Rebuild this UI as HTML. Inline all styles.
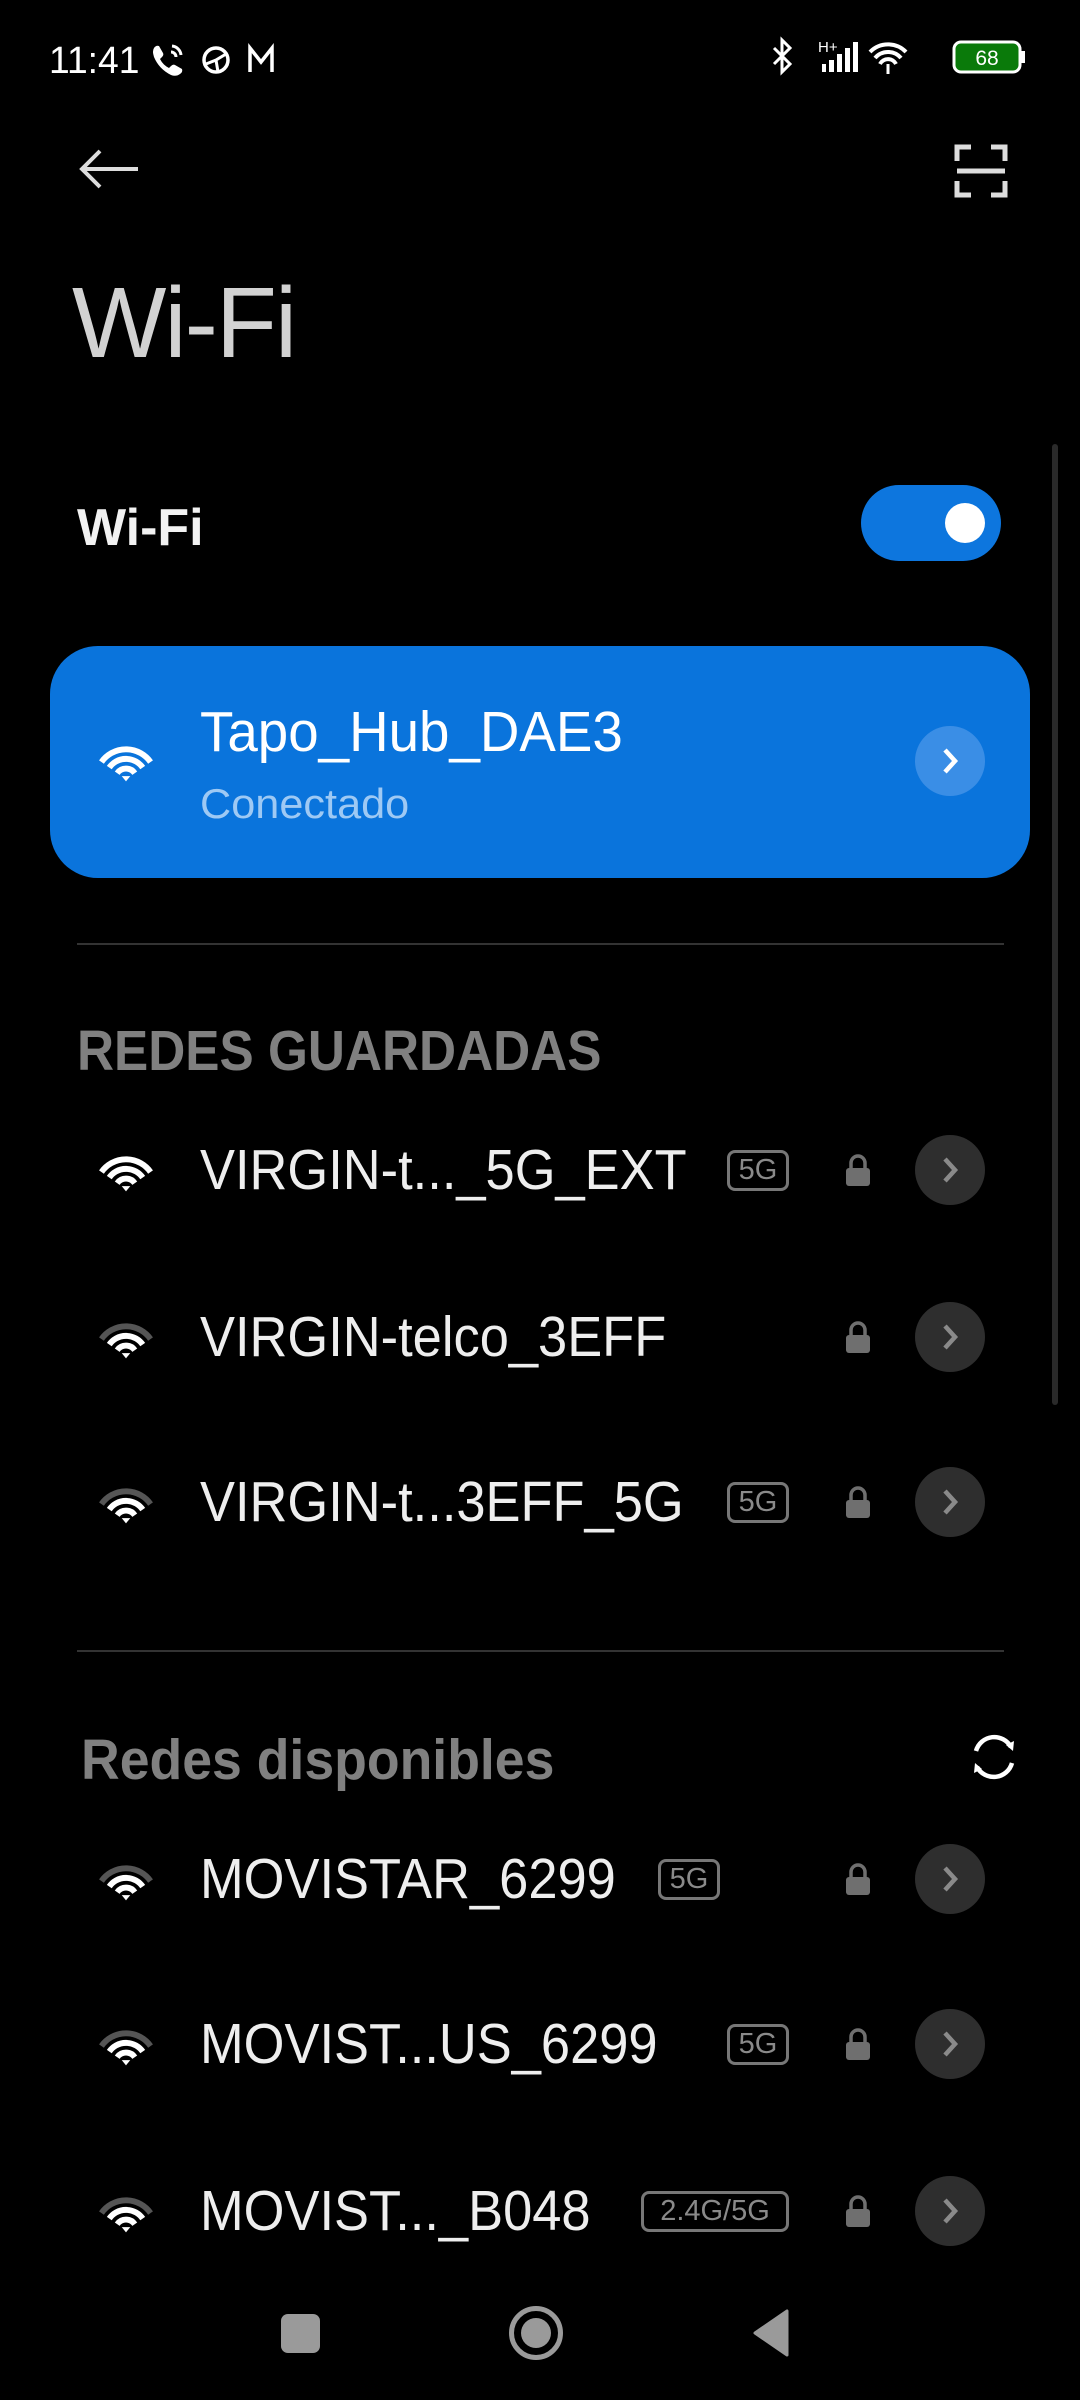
<!DOCTYPE html>
<html><head><meta charset="utf-8"><style>
*{margin:0;padding:0;box-sizing:border-box}
body{width:1080px;height:2400px;background:#000;position:relative;overflow:hidden;font-family:"Liberation Sans",sans-serif;color:#eee}
.a{position:absolute}
.n{position:absolute;left:200px;font-size:57px;line-height:1;color:#eee;transform:scaleX(.92);transform-origin:left center;white-space:nowrap}
.badge{position:absolute;height:41px;border:3px solid #777;border-radius:8px;color:#8a8a8a;font-size:29px;line-height:35px;text-align:center}
.chev{position:absolute;left:915px;width:70px;height:70px;border-radius:50%;background:#2e2e2e}
.lock{position:absolute;left:844px}
.wifi{position:absolute;left:96px}
</style></head><body>

<!-- status bar -->
<div class="a" style="left:49px;top:40px;font-size:38px;color:#fff;transform:scaleX(.98);transform-origin:left">11:41</div>
<svg class="a" style="left:150px;top:42px" width="170" height="36" viewBox="0 0 170 36">
<path d="M4 6 q2-3 5-2 l4 7 q1 2-1 4 l-2 2 q3 6 9 9 l2-2 q2-2 4-1 l7 4 q1 3-2 5 q-4 3-9 1 q-12-6-17-18 q-2-6 0-9z" fill="#fff"/>
<path d="M22 4 a10 10 0 0 1 9 9 M21 10 a5 5 0 0 1 5 5" stroke="#fff" stroke-width="3" fill="none"/>
<circle cx="66" cy="18" r="12" stroke="#fff" stroke-width="3.5" fill="none"/>
<path d="M56 22 l10-4 l10-6 M66 18 l2 12" stroke="#fff" stroke-width="3" fill="none"/>
<path d="M100 30 V6 l11 14 l11-14 V30" stroke="#fff" stroke-width="3.5" fill="none"/>
</svg>
<svg class="a" style="left:770px;top:36px" width="255" height="46" viewBox="0 0 255 46">
<path d="M4 12 l16 16 l-8 8 V4 l8 8 l-16 16" stroke="#fff" stroke-width="3" fill="none"/>
<text x="48" y="16" font-size="15" fill="#fff" font-family="Liberation Sans">H+</text>
<rect x="52" y="28" width="4" height="8" fill="#fff"/><rect x="59" y="24" width="5" height="12" fill="#fff"/><rect x="67" y="18" width="5" height="18" fill="#fff"/><rect x="75" y="12" width="5" height="24" fill="#fff"/><rect x="83" y="6" width="5" height="30" fill="#fff"/>
<path d="M100 16 a25 25 0 0 1 36 0 M105 22 a17 17 0 0 1 26 0 M110 28 a9 9 0 0 1 16 0" stroke="#fff" stroke-width="4" fill="none"/>
<path d="M118 28 v10" stroke="#fff" stroke-width="3"/>
<rect x="184" y="6" width="66" height="30" rx="7" fill="#0a7a0a" stroke="#fff" stroke-width="3"/>
<rect x="251" y="15" width="4" height="12" fill="#fff"/>
<text x="217" y="29" font-size="21" fill="#fff" text-anchor="middle" font-family="Liberation Sans">68</text>
</svg>

<!-- top bar -->
<svg class="a" style="left:78px;top:148px" width="64" height="42" viewBox="0 0 64 42"><path d="M4 21 H60 M22 3 L4 21 L22 39" stroke="#ddd" stroke-width="4" fill="none"/></svg>
<svg class="a" style="left:953px;top:143px" width="56" height="56" viewBox="0 0 56 56"><path d="M4 18 V4 H18 M38 4 H52 V18 M52 38 V52 H38 M18 52 H4 V38" stroke="#ddd" stroke-width="5" fill="none"/><path d="M4 28 H52" stroke="#ddd" stroke-width="5"/></svg>

<div class="a" style="left:72px;top:273px;font-size:100px;line-height:1;color:#d2d2d2;letter-spacing:-2px">Wi-Fi</div>

<div class="a" style="left:77px;top:498px;font-size:52px;font-weight:bold;color:#f2f2f2">Wi-Fi</div>
<div class="a" style="left:861px;top:485px;width:140px;height:76px;border-radius:38px;background:#0d76de"></div>
<div class="a" style="left:945px;top:503px;width:40px;height:40px;border-radius:50%;background:#fff"></div>

<div class="a" style="left:1052px;top:444px;width:6px;height:961px;border-radius:3px;background:#2a2a2a"></div>

<!-- connected card -->
<div class="a" style="left:50px;top:646px;width:980px;height:232px;border-radius:48px;background:#0a74dc"></div>
<svg class="a" style="left:96px;top:738px" width="60" height="44" viewBox="0 0 56 40"><path d="M5.1 21.9 A28 28 0 0 1 50.9 21.9 M12.4 27.1 A19 19 0 0 1 43.6 27.1 M19.8 32.3 A10 10 0 0 1 36.2 32.3" stroke="#fff" stroke-width="5.5" fill="none"/><path d="M24 35 L32 35 L28 40Z" fill="#fff"/></svg>
<div class="a" style="left:200px;top:704px;font-size:57px;line-height:1;color:#fff;transform:scaleX(.96);transform-origin:left">Tapo_Hub_DAE3</div>
<div class="a" style="left:200px;top:783px;font-size:42px;line-height:1;color:#9ec9f4;transform:scaleX(1.03);transform-origin:left">Conectado</div>
<div class="a" style="left:915px;top:726px;width:70px;height:70px;border-radius:50%;background:#3a8ee6"></div>
<svg class="a" style="left:940px;top:746px" width="20" height="30" viewBox="0 0 20 30"><path d="M5 4 L15 15 L5 26" stroke="#fff" stroke-width="4.5" fill="none"/></svg>

<div class="a" style="left:77px;top:943px;width:927px;height:2px;background:#333"></div>
<div class="a" style="left:77px;top:1023px;font-size:57px;line-height:1;color:#808080;font-weight:bold;transform:scaleX(.9);transform-origin:left;white-space:nowrap">REDES GUARDADAS</div>

<!-- saved rows -->
<div class="n" style="top:1142px">VIRGIN-t..._5G_EXT</div>
<div class="badge" style="left:727px;top:1150px;width:62px">5G</div>
<div class="n" style="top:1309px">VIRGIN-telco_3EFF</div>
<div class="n" style="top:1474px">VIRGIN-t...3EFF_5G</div>
<div class="badge" style="left:727px;top:1482px;width:62px">5G</div>

<div class="a" style="left:77px;top:1650px;width:927px;height:2px;background:#333"></div>
<div class="a" style="left:81px;top:1732px;font-size:57px;line-height:1;color:#808080;font-weight:bold;transform:scaleX(.94);transform-origin:left;white-space:nowrap">Redes disponibles</div>
<svg class="a" style="left:968px;top:1731px" width="52" height="52" viewBox="0 0 52 52"><path d="M8 20 A19 19 0 0 1 43 16 M44 32 A19 19 0 0 1 9 36" stroke="#fff" stroke-width="4.5" fill="none"/><path d="M38 14 L46 10 L45 20Z M14 38 L6 42 L7 32Z" fill="#fff"/></svg>

<div class="n" style="top:1851px">MOVISTAR_6299</div>
<div class="badge" style="left:658px;top:1859px;width:62px">5G</div>
<div class="n" style="top:2016px">MOVIST...US_6299</div>
<div class="badge" style="left:727px;top:2024px;width:62px">5G</div>
<div class="n" style="top:2183px">MOVIST..._B048</div>
<div class="badge" style="left:641px;top:2191px;width:148px">2.4G/5G</div>

<svg width="0" height="0" style="position:absolute"><defs>
<g id="w"><path d="M12.4 27.1 A19 19 0 0 1 43.6 27.1 M19.8 32.3 A10 10 0 0 1 36.2 32.3" stroke="#fff" stroke-width="5.5" fill="none"/><path d="M24 35 L32 35 L28 40Z" fill="#fff"/></g>
<g id="lk"><path d="M7 14 V9 a7 7 0 0 1 14 0 V14" stroke="#6f6f6f" stroke-width="3.5" fill="none"/><rect x="2" y="14" width="24" height="18" rx="3" fill="#6f6f6f"/></g>
<g id="ch"><path d="M5 4 L15 15 L5 26" stroke="#8a8a8a" stroke-width="4.5" fill="none"/></g>
</defs></svg>

<svg class="wifi" style="top:1148px" width="60" height="44" viewBox="0 0 56 40"><path d="M5.1 21.9 A28 28 0 0 1 50.9 21.9" stroke="#fff" stroke-width="5.5" fill="none"/><use href="#w"/></svg>
<svg class="wifi" style="top:1315px" width="60" height="44" viewBox="0 0 56 40"><path d="M5.1 21.9 A28 28 0 0 1 50.9 21.9" stroke="#555" stroke-width="5.5" fill="none"/><use href="#w"/></svg>
<svg class="wifi" style="top:1480px" width="60" height="44" viewBox="0 0 56 40"><path d="M5.1 21.9 A28 28 0 0 1 50.9 21.9" stroke="#555" stroke-width="5.5" fill="none"/><use href="#w"/></svg>
<svg class="wifi" style="top:1857px" width="60" height="44" viewBox="0 0 56 40"><path d="M5.1 21.9 A28 28 0 0 1 50.9 21.9" stroke="#555" stroke-width="5.5" fill="none"/><use href="#w"/></svg>
<svg class="wifi" style="top:2022px" width="60" height="44" viewBox="0 0 56 40"><path d="M5.1 21.9 A28 28 0 0 1 50.9 21.9" stroke="#555" stroke-width="5.5" fill="none"/><use href="#w"/></svg>
<svg class="wifi" style="top:2189px" width="60" height="44" viewBox="0 0 56 40"><path d="M5.1 21.9 A28 28 0 0 1 50.9 21.9" stroke="#555" stroke-width="5.5" fill="none"/><use href="#w"/></svg>

<svg class="lock" style="top:1154px" width="28" height="32" viewBox="0 0 28 32"><use href="#lk"/></svg>
<svg class="lock" style="top:1321px" width="28" height="32" viewBox="0 0 28 32"><use href="#lk"/></svg>
<svg class="lock" style="top:1486px" width="28" height="32" viewBox="0 0 28 32"><use href="#lk"/></svg>
<svg class="lock" style="top:1863px" width="28" height="32" viewBox="0 0 28 32"><use href="#lk"/></svg>
<svg class="lock" style="top:2028px" width="28" height="32" viewBox="0 0 28 32"><use href="#lk"/></svg>
<svg class="lock" style="top:2195px" width="28" height="32" viewBox="0 0 28 32"><use href="#lk"/></svg>

<div class="chev" style="top:1135px"></div><svg class="a" style="left:940px;top:1155px" width="20" height="30" viewBox="0 0 20 30"><use href="#ch"/></svg>
<div class="chev" style="top:1302px"></div><svg class="a" style="left:940px;top:1322px" width="20" height="30" viewBox="0 0 20 30"><use href="#ch"/></svg>
<div class="chev" style="top:1467px"></div><svg class="a" style="left:940px;top:1487px" width="20" height="30" viewBox="0 0 20 30"><use href="#ch"/></svg>
<div class="chev" style="top:1844px"></div><svg class="a" style="left:940px;top:1864px" width="20" height="30" viewBox="0 0 20 30"><use href="#ch"/></svg>
<div class="chev" style="top:2009px"></div><svg class="a" style="left:940px;top:2029px" width="20" height="30" viewBox="0 0 20 30"><use href="#ch"/></svg>
<div class="chev" style="top:2176px"></div><svg class="a" style="left:940px;top:2196px" width="20" height="30" viewBox="0 0 20 30"><use href="#ch"/></svg>

<!-- nav bar -->
<div class="a" style="left:281px;top:2314px;width:39px;height:39px;border-radius:7px;background:#9a9a9a"></div>
<div class="a" style="left:509px;top:2306px;width:54px;height:54px;border-radius:50%;border:5px solid #9a9a9a"></div>
<div class="a" style="left:521px;top:2318px;width:30px;height:30px;border-radius:50%;background:#9a9a9a"></div>
<svg class="a" style="left:751px;top:2309px" width="40" height="48" viewBox="0 0 40 48"><path d="M36 2 V46 L4 24Z" fill="#9a9a9a" stroke="#9a9a9a" stroke-width="3" stroke-linejoin="round"/></svg>

</body></html>
